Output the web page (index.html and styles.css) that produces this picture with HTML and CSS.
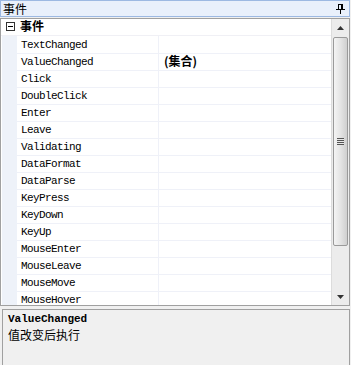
FILE: index.html
```html
<!DOCTYPE html>
<html lang="zh-CN">
<head>
    <meta charset="UTF-8">
    <title>事件</title>
    <link rel="stylesheet" href="styles.css">
</head>
<body>
    <div class="panel">
        <div class="title-bar">
            <span class="title-text">事件</span>
            <svg class="pin" width="9" height="10" viewBox="0 0 9 10">
                <path d="M2 0.5h5M2.5 0.5v5M5.5 0.5v5M6.5 0.5v5M0 5.5h9M4.5 6v4" stroke="#000" stroke-width="1" fill="none"/>
            </svg>
        </div>

        <div class="grid">
            <div class="rows">
                <div class="category">
                    <span class="toggle">
                        <svg width="9" height="9" viewBox="0 0 9 9">
                            <rect x="0.5" y="0.5" width="8" height="8" fill="#fff" stroke="#333"/>
                            <path d="M2 4.5h5" stroke="#000"/>
                        </svg>
                    </span>
                    <span class="category-name">事件</span>
                </div>
                <div class="row"><span class="name">TextChanged</span><span class="value"></span></div>
                <div class="row"><span class="name">ValueChanged</span><span class="value bold">(集合)</span></div>
                <div class="row"><span class="name">Click</span><span class="value"></span></div>
                <div class="row"><span class="name">DoubleClick</span><span class="value"></span></div>
                <div class="row"><span class="name">Enter</span><span class="value"></span></div>
                <div class="row"><span class="name">Leave</span><span class="value"></span></div>
                <div class="row"><span class="name">Validating</span><span class="value"></span></div>
                <div class="row"><span class="name">DataFormat</span><span class="value"></span></div>
                <div class="row"><span class="name">DataParse</span><span class="value"></span></div>
                <div class="row"><span class="name">KeyPress</span><span class="value"></span></div>
                <div class="row"><span class="name">KeyDown</span><span class="value"></span></div>
                <div class="row"><span class="name">KeyUp</span><span class="value"></span></div>
                <div class="row"><span class="name">MouseEnter</span><span class="value"></span></div>
                <div class="row"><span class="name">MouseLeave</span><span class="value"></span></div>
                <div class="row"><span class="name">MouseMove</span><span class="value"></span></div>
                <div class="row"><span class="name">MouseHover</span><span class="value"></span></div>
            </div>
            <div class="scrollbar">
                <div class="arrow">
                    <svg width="7" height="4" viewBox="0 0 7 4"><path d="M3.5 0L7 4H0z" fill="#333"/></svg>
                </div>
                <div class="track">
                    <div class="thumb">
                        <span class="grip"></span>
                    </div>
                </div>
                <div class="arrow">
                    <svg width="7" height="4" viewBox="0 0 7 4"><path d="M0 0H7L3.5 4z" fill="#333"/></svg>
                </div>
            </div>
        </div>

        <div class="desc">
            <div class="desc-title">ValueChanged</div>
            <div class="desc-text">值改变后执行</div>
        </div>
    </div>
</body>
</html>
```

FILE: styles.css
```css
body {
    margin: 0;
    padding: 0;
    background-color: #f0f0f0;
    font-family: "Liberation Mono", "Noto Sans CJK SC", monospace;
    font-size: 11px;
    letter-spacing: -0.6px;
    color: #000;
}
.panel {
    width: 351px;
    height: 365px;
    display: flex;
    flex-direction: column;
}
.title-bar {
    height: 15px;
    margin: 0 1px 0 0;
    border: 1px solid #9db9e2;
    background-color: #e9f0fb;
    display: flex;
    align-items: center;
    justify-content: space-between;
    padding: 0 4px 0 2px;
}
.title-text {
    font-family: "Noto Sans CJK SC", sans-serif;
    font-size: 12px;
    letter-spacing: 0;
    line-height: 15px;
}
.pin {
    display: block;
}
.grid {
    margin-top: 1px;
    height: 286px;
    margin-right: 1px;
    border: 1px solid #a0a0a0;
    background-color: #fff;
    display: flex;
}
/* only the bottom needs clipping: the last row runs past the frame */
.rows {
    flex: 1;
    min-width: 0;
    clip-path: inset(-6px 0 0 0);
}
.category {
    height: 16px;
    display: flex;
    align-items: center;
    background-color: #fff;
    border-bottom: 1px solid #f0f0f5;
}
.toggle {
    width: 16px;
    display: flex;
    justify-content: center;
    padding-left: 1px;
    margin-bottom: 1px;
}
.toggle svg {
    display: block;
}
.category-name {
    font-family: "Noto Sans CJK SC", sans-serif;
    font-size: 12px;
    font-weight: bold;
    letter-spacing: 0;
    line-height: 16px;
    margin-left: 2px;
    margin-bottom: 2px;
}
.row {
    display: grid;
    grid-template-columns: 142px 1fr;
    height: 17px;
    margin-left: 16px;
    position: relative;
}
.row::before {
    content: "";
    position: absolute;
    left: -15px;
    top: 0;
    bottom: 0;
    width: 15px;
    background-color: #eef2f9;
}
.name,
.value {
    border-bottom: 1px solid #eff1f8;
    padding-top: 1px;
    line-height: 16px;
    white-space: nowrap;
}
.name {
    padding-left: 4px;
    border-right: 1px solid #eff1f8;
}
.value {
    padding-left: 5px;
}
.bold {
    font-family: "Noto Sans CJK SC", sans-serif;
    font-size: 12px;
    font-weight: bold;
    letter-spacing: 0;
    padding-top: 0;
}
.scrollbar {
    width: 17px;
    display: flex;
    flex-direction: column;
    background-color: #ececec;
    border-left: 1px solid #dcdcdc;
}
.arrow {
    height: 17px;
    display: flex;
    align-items: center;
    justify-content: center;
}
.arrow svg {
    display: block;
}
.track {
    flex: 1;
    padding: 1px 0;
}
.thumb {
    height: 207px;
    margin: 0 1px;
    border: 1px solid #9a9a9a;
    border-radius: 2px;
    background: linear-gradient(to right, #f4f4f4, #e4e4e4 50%, #cfcfcf);
    display: flex;
    align-items: center;
    justify-content: center;
}
.grip {
    width: 7px;
    height: 7px;
    background: repeating-linear-gradient(to bottom, #555 0, #555 1px, #e8e8e8 1px, #e8e8e8 2px);
}
.desc {
    flex: 1;
    margin-top: 3px;
    margin-left: 2px;
    margin-right: 1px;
    border: 1px solid #a0a0a0;
    border-bottom: none;
    background-color: #f0f0f0;
    padding: 2px 5px;
}
.desc-title {
    font-weight: bold;
    letter-spacing: 0;
    line-height: 15px;
}
.desc-text {
    font-family: "Noto Sans CJK SC", sans-serif;
    font-size: 12px;
    letter-spacing: 0;
    line-height: 15px;
}
```
